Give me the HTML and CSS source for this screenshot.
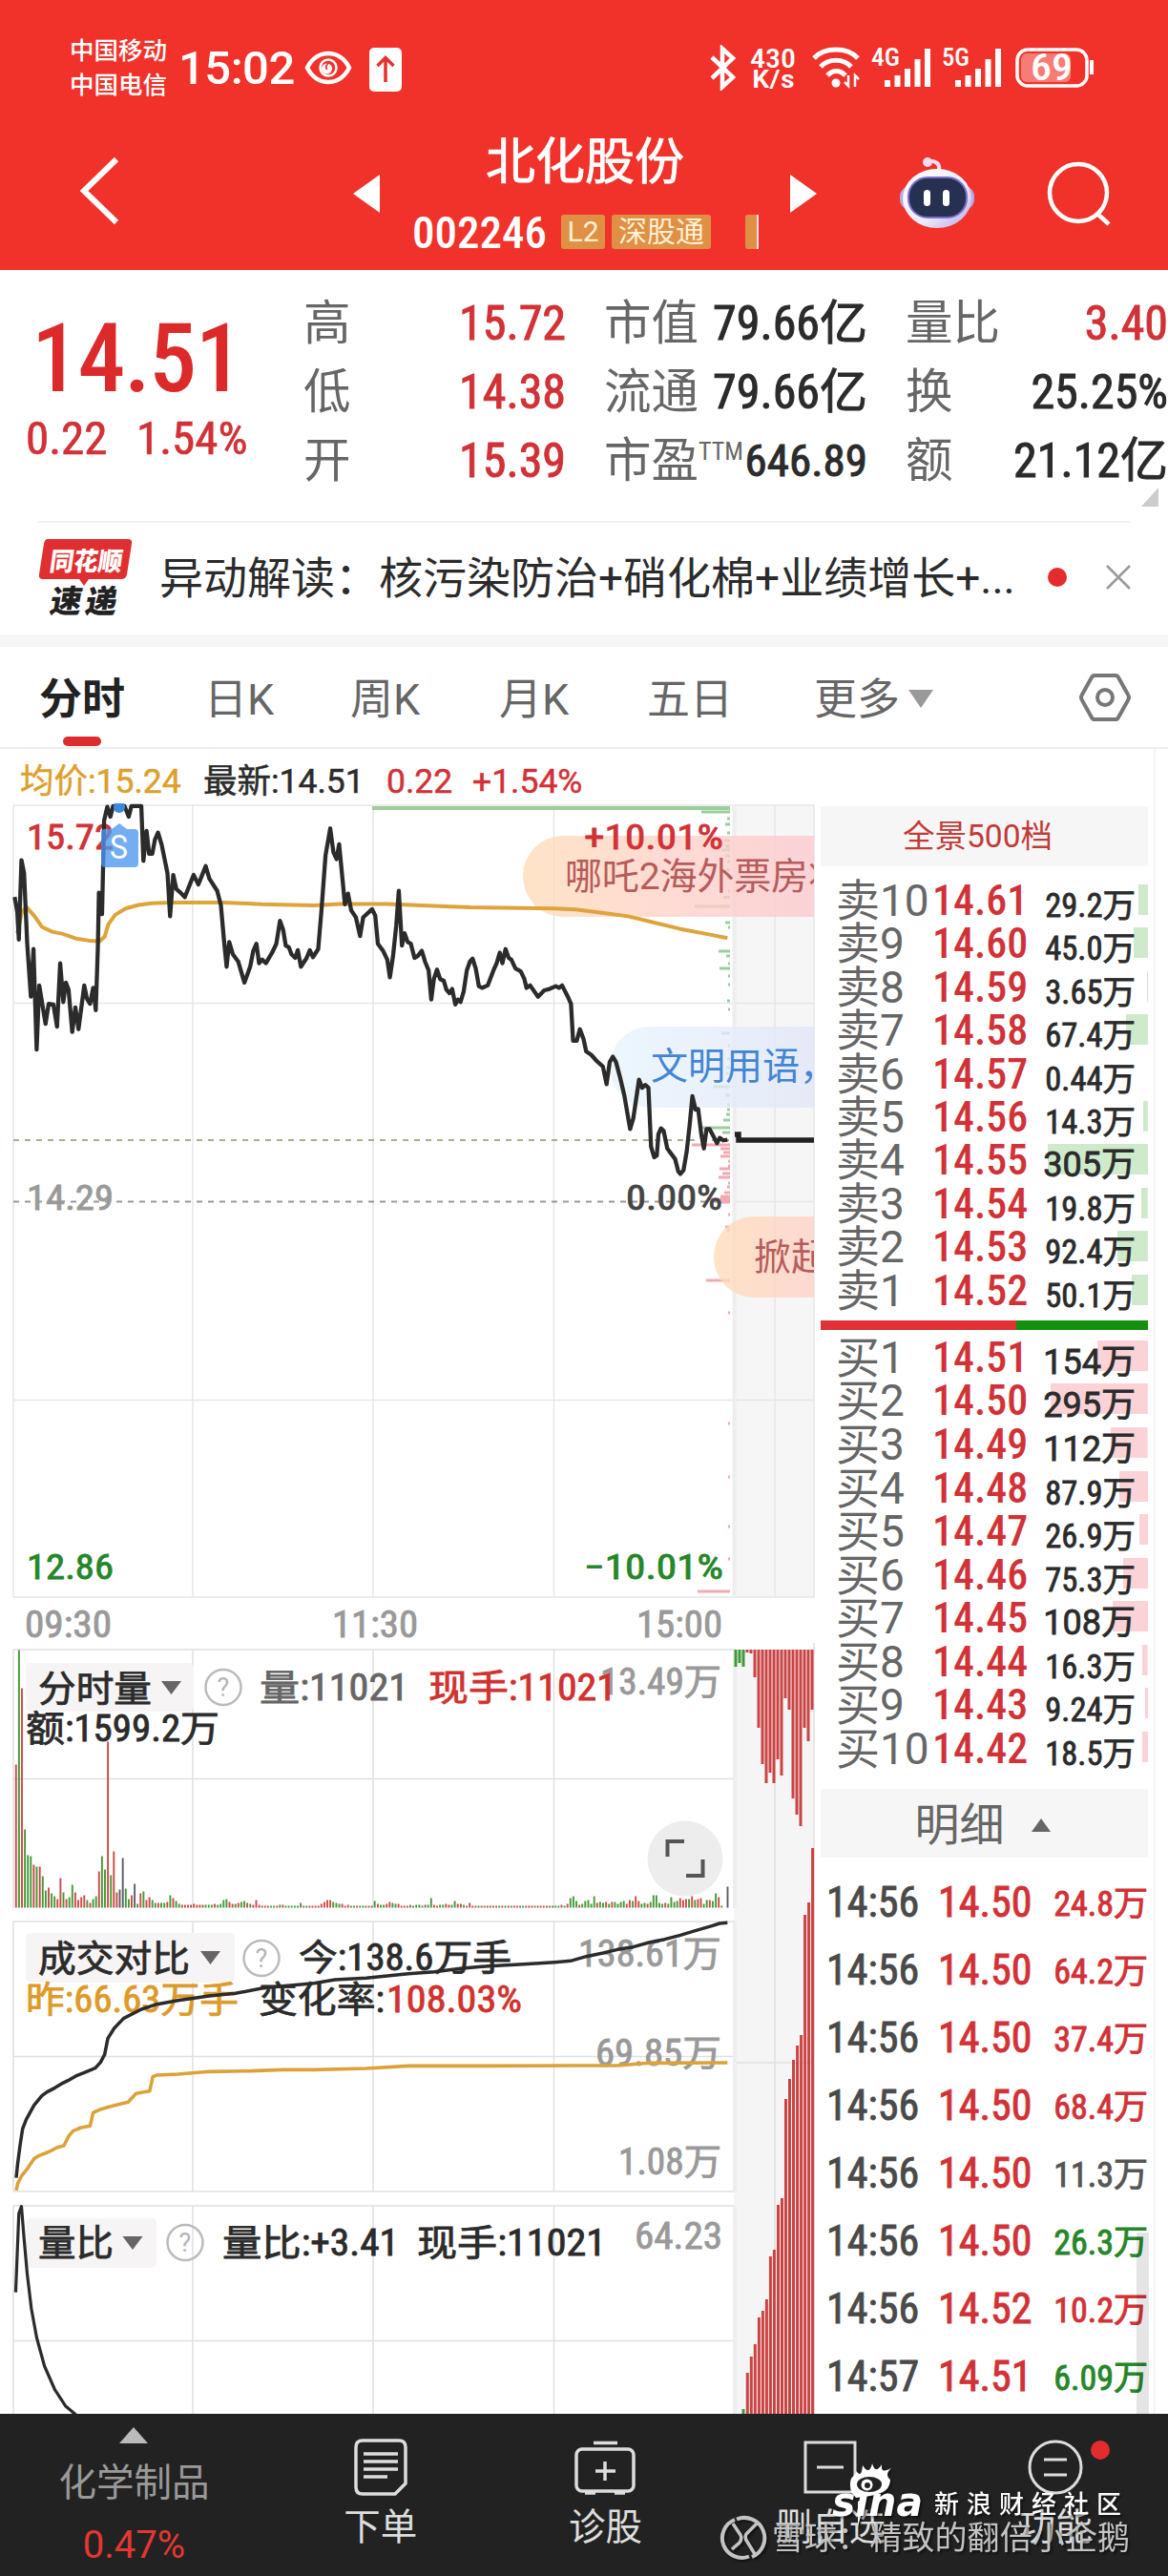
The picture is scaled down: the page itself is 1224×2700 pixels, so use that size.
FILE: index.html
```html
<!DOCTYPE html>
<html lang="zh-CN">
<head>
<meta charset="utf-8">
<title>北化股份 002246</title>
<link rel="stylesheet" href="styles.css">
</head>
<body>
<header class="top">
  <div class="status">
    <div class="carriers"><span>中国移动</span><span>中国电信</span></div>
    <span class="clock">15:02</span>
    <svg class="eye" width="50" height="36" viewBox="0 0 50 36" fill="none" stroke="#fff"><path d="M3 18C13 -2 37 -2 47 18 37 38 13 38 3 18Z" stroke-width="4.500"/><circle cx="25" cy="18" r="8.500" stroke-width="2.500"/><circle cx="23.500" cy="19" r="5.500" fill="#fff" stroke="none"/><path d="M26 13C23 14 22 17 23.500 20" stroke="#f0322b" stroke-width="1.800"/></svg>
    <svg class="up" width="34" height="46" viewBox="0 0 34 46"><rect width="34" height="46" rx="5" fill="#fff"/><path d="M17 36V11M8.500 19 17 10.500 25.500 19" fill="none" stroke="#e5302b" stroke-width="3.500"/></svg>
    <svg class="signals" width="406" height="48" viewBox="742 47 406 48" fill="none" stroke="#fff">
      <path d="M746 60 768 81 757 91V51L768 61 746 82" stroke-width="4.500"/>
      <g class="statnum" fill="#fff" stroke="none"><text x="786" y="71" font-size="28" textLength="48" lengthAdjust="spacingAndGlyphs">430</text><text x="788" y="92" font-size="25" textLength="45" lengthAdjust="spacingAndGlyphs">K/s</text><text x="913" y="69" font-size="26" textLength="30" lengthAdjust="spacingAndGlyphs">4G</text><text x="987" y="69" font-size="26" textLength="29" lengthAdjust="spacingAndGlyphs">5G</text></g>
      <path d="M853 61C864 49 888 49 899 61M860 70C868 61 884 61 892 70M867 79C873 73 880 73 886 79" stroke-width="5"/>
      <circle cx="876" cy="87" r="4.500" fill="#fff" stroke="none"/>
      <path d="M889 79V90L885 86M896 91V79L900 83" stroke-width="2.500"/>
      <path d="M930 84V91M940.500 79V91M951 72V91M961.500 62V91M972 51V91M1004 84V91M1014.500 79V91M1025 72V91M1035.500 62V91M1046 51V91" stroke-width="6"/>
      <rect x="1066" y="52" width="73" height="38" rx="11" stroke-width="3.500"/><rect x="1070" y="56" width="52" height="30" rx="6" fill="#f77c76" stroke="none"/><path d="M1144 63V78" stroke-width="4"/>
      <text class="statnum" x="1080" y="84" font-size="38" textLength="44" lengthAdjust="spacingAndGlyphs" fill="#fff" stroke="none">69</text>
    </svg>
  </div>
  <div class="titlebar">
    <svg class="back" width="44" height="72" viewBox="0 0 44 72"><path d="M40 3 6 36 40 69" fill="none" stroke="#fff" stroke-width="6"/></svg>
    <svg class="prev" width="28" height="40" viewBox="0 0 28 40"><path d="M28 0V40L0 20Z" fill="#fff"/></svg>
    <div class="title">
      <h1>北化股份</h1>
      <div class="code"><span class="codenum">002246</span><span class="badge l2">L2</span><span class="badge sgt">深股通</span><span class="badge cut"></span></div>
    </div>
    <svg class="next" width="28" height="40" viewBox="0 0 28 40"><path d="M0 0V40L28 20Z" fill="#fff"/></svg>
    <svg class="robot" width="80" height="76" viewBox="0 0 80 76">
      <defs><linearGradient id="shell" x1="0" y1="0" x2="1" y2="1"><stop offset="0" stop-color="#fff"/><stop offset=".6" stop-color="#ecebfa"/><stop offset="1" stop-color="#b5a4e8"/></linearGradient></defs>
      <path d="M42 14C43 8 39 4 31 5" fill="none" stroke="#f2dff2" stroke-width="4"/><circle cx="30" cy="6" r="5" fill="#f2dff2"/>
      <rect x="1" y="31" width="78" height="25" rx="11" fill="#b9a8e4"/><ellipse cx="40" cy="44" rx="36" ry="31" fill="url(#shell)"/><rect x="10" y="22" width="61" height="42" rx="20" fill="#263050" stroke="#7a6fcb" stroke-width="2"/><rect x="26" y="35" width="7" height="17" rx="3.500" fill="#fff"/><rect x="46" y="35" width="7" height="17" rx="3.500" fill="#fff"/>
    </svg>
    <svg class="search" width="70" height="70" viewBox="0 0 70 70" fill="none" stroke="#fff" stroke-width="4.500"><circle cx="34" cy="34" r="30"/><path d="M54 56 66 67"/></svg>
  </div>
</header>

<section class="quote">
  <div class="last"><div class="price">14.51</div><div class="chg"><span>0.22</span><span>1.54%</span></div></div>
  <dl class="q1"><dt>高</dt><dd class="red">15.72</dd><dt>低</dt><dd class="red">14.38</dd><dt>开</dt><dd class="red">15.39</dd></dl>
  <dl class="q2"><dt>市值</dt><dd>79.66亿</dd><dt>流通</dt><dd>79.66亿</dd><dt class="ttm">市盈<sup>TTM</sup></dt><dd class="pe">646.89</dd></dl>
  <dl class="q3"><dt>量比</dt><dd class="red">3.40</dd><dt>换</dt><dd>25.25%</dd><dt>额</dt><dd>21.12亿</dd></dl>
</section>
<div class="corner"><svg width="18" height="20" viewBox="0 0 18 20"><path d="M18 0V20H0Z" fill="#ccc"/></svg></div>

<section class="news">
  <svg class="flash" width="100" height="84" viewBox="40 563 100 84">
    <path d="M50 565H134Q139 565 138 570L133 602Q132 607 127 607H93L88 614 83 607H45Q40 607 41 602L46 570Q47 565 50 565Z" fill="#e02f30"/>
    <text x="0" y="0" transform="translate(51 598) skewX(-8)" font-size="27" font-weight="900" textLength="76" lengthAdjust="spacingAndGlyphs" fill="#fff">同花顺</text>
    <text x="0" y="0" transform="translate(51 642) skewX(-10)" font-size="33" font-weight="900" textLength="70" fill="#222">速递</text>
  </svg>
  <span class="headline">异动解读：核污染防治+硝化棉+业绩增长+...</span>
  <i class="dot"></i>
  <svg class="close" width="28" height="28" viewBox="0 0 28 28"><path d="M2 2 26 26M26 2 2 26" stroke="#999" stroke-width="2.500"/></svg>
</section>

<nav class="tabs">
  <span class="on">分时</span><span class="t2">日K</span><span class="t3">周K</span><span class="t4">月K</span><span class="t5">五日</span><span class="t6">更多</span>
  <svg class="more" width="26" height="19" viewBox="0 0 26 19"><path d="M0 0H26L13 19Z" fill="#999"/></svg>
  <svg class="hex" width="56" height="52" viewBox="0 0 56 52" fill="none" stroke="#777" stroke-width="4"><path d="M17 3H39Q41 3 42 5L52 23Q54 26 52 29L42 47Q41 49 39 49H17Q15 49 14 47L4 29Q2 26 4 23L14 5Q15 3 17 3Z"/><circle cx="28" cy="26" r="8"/></svg>
</nav>

<main class="body">
  <div class="charts">
    <div class="legend"><span class="avg">均价:15.24</span><span class="new">最新:14.51</span><span class="red d">0.22</span><span class="red">+1.54%</span></div>
    <svg class="chart" width="857" height="880" viewBox="0 842 857 880">
      <defs>
        <linearGradient id="warm" x1="0" x2="1"><stop offset="0" stop-color="#ffdcb8"/><stop offset=".45" stop-color="#ffd0c8"/><stop offset="1" stop-color="#fbc6d0"/></linearGradient>
        <linearGradient id="cool" x1="0" x2="1"><stop offset="0" stop-color="#e6f4fd"/><stop offset="1" stop-color="#dfe1f6"/></linearGradient>
        <clipPath id="plot"><rect x="0" y="842" width="853" height="840"/></clipPath>
      </defs>
      <rect x="768" y="844" width="85" height="830" fill="#f6f6f6"/>
      <path d="M14 844H853V1674H14ZM202 844V1674M391 844V1674M580.500 844V1674M812 844V1674M14 1051.500H853M770 1259.500H853M14 1467.500H853" fill="none" stroke="#e6e6e6" stroke-width="1.500"/>
      <path d="M769.500 844V1674" stroke="#eee" stroke-width="4"/>
      <path d="M14 1195H765" stroke="#a9b08c" stroke-width="2" stroke-dasharray="6 6"/>
      <path d="M14 1259.500H765" stroke="#999" stroke-width="2" stroke-dasharray="6 6"/>
      <path d="M390 847H765" stroke="#9bcd9d" stroke-width="4"/>
      <path id="chipsG" fill="none" stroke="#9bcd9d" stroke-width="3"/><path id="chipsR" fill="none" stroke="#f3a9b1" stroke-width="3"/>
      <g clip-path="url(#plot)"><g opacity=".78"><rect x="548" y="876" width="360" height="85" rx="42" fill="url(#warm)"/><rect x="639" y="1076" width="290" height="85" rx="42" fill="url(#cool)"/><rect x="748" y="1275" width="250" height="85" rx="42" fill="url(#warm)"/></g></g>
      <g class="fit" font-size="36"><text x="28" y="890" data-w="91" fill="#d13237">15.72</text><text x="612" y="890" data-w="146" fill="#d13237">+10.01%</text></g>
      <g clip-path="url(#plot)" font-size="39">
        <text x="592" y="932" fill="#b65c5c" textLength="294">哪吒2海外票房将</text>
        <text x="682" y="1131" fill="#4385d3">文明用语，</text>
        <text x="790" y="1331" fill="#b65c5c">掀起</text>
      </g>
      <g transform="translate(0 660) scale(.54845 .3699)" fill="none" stroke-linejoin="round">
        <polyline vector-effect="non-scaling-stroke" stroke="#dea43c" stroke-width="4" points="33,860 42,800 50,785 65,810 80,842 100,856 120,862 145,875 170,881 190,883 200,870 207,835 220,808 240,790 265,780 290,775 325,773 430,773 500,778 600,781 650,777 740,777 850,784 900,787 1000,789 1060,790 1100,793 1150,802 1200,812 1250,830 1300,848 1350,862 1390,874"/>
        <polyline vector-effect="non-scaling-stroke" stroke="#2b2b2b" stroke-width="4.300" points="28,757 33,800 36,878 41,653 46,690 52,890 59,1040 64,905 70,1190 75,1008 87,1117 93,1060 102,1062 109,1125 115,945 121,1055 126,1000 131,1020 138,1140 144,1070 150,1132 161,1008 166,1045 172,1060 178,1015 183,1078 187,900 189,745 195,806 199,540 205,502 211,530 216,500 238,500 246,530 251,500 270,500 274,655 280,570 285,635 291,635 296,595 302,575 309,610 320,690 325,812 331,695 337,735 345,745 353,758 362,725 370,695 379,722 385,700 393,670 400,705 415,740 422,780 428,880 433,955 438,885 445,920 455,940 460,965 467,1000 478,955 484,910 490,890 495,945 501,935 508,945 520,915 528,890 535,825 541,850 546,895 552,900 557,920 564,930 569,908 575,955 586,930 592,908 598,928 608,905 614,800 622,640 631,563 637,630 643,650 648,608 654,700 659,778 665,748 671,795 680,815 688,868 694,815 711,792 717,810 722,890 732,910 740,935 745,985 751,925 757,840 762,740 768,895 773,860 779,885 785,890 792,930 798,925 806,910 812,940 819,965 824,1048 829,990 835,963 841,990 848,995 853,1020 859,1030 864,1018 870,1062 875,1048 880,1055 886,1025 892,965 898,940 903,932 909,960 915,1010 921,1015 932,1008 943,965 949,945 955,915 960,945 966,905 972,930 977,935 985,960 995,968 1002,990 1006,1015 1013,1008 1028,1040 1040,1022 1050,1018 1062,1010 1068,1015 1074,1008 1085,1040 1091,1060 1095,1165 1102,1165 1108,1132 1115,1160 1120,1195 1130,1205 1140,1222 1152,1238 1159,1288 1165,1225 1171,1210 1177,1225 1185,1270 1193,1320 1204,1415 1210,1385 1221,1275 1227,1298 1233,1290 1239,1298 1244,1465 1250,1495 1255,1490 1258,1430 1263,1413 1268,1420 1275,1470 1290,1500 1296,1535 1300,1542 1306,1532 1312,1480 1318,1400 1323,1322 1329,1360 1334,1358 1340,1430 1345,1470 1350,1415 1356,1415 1363,1435 1370,1455 1375,1440 1382,1447 1390,1445"/>
      </g>
      <path d="M770 1189H774V1195H853" fill="none" stroke="#222" stroke-width="5.500"/>
      <circle cx="125" cy="846" r="6" fill="#3c8ade"/>
      <path d="M110 869H117L125 863 133 869H141Q145 869 145 873V905Q145 909 141 909H110Q106 909 106 905V873Q106 869 110 869Z" fill="#4d97ee" opacity=".78"/>
      <text x="115" y="900" font-size="35" fill="#fff" textLength="19" lengthAdjust="spacingAndGlyphs">S</text>
      <g class="fit" font-size="36">
        <text x="28" y="1268" data-w="91" fill="#999">14.29</text><text x="656" y="1268" data-w="101" fill="#444">0.00%</text>
        <text x="28" y="1655" data-w="91" fill="#26862a">12.86</text><text x="612" y="1655" data-w="146" fill="#26862a">−10.01%</text>
        <g font-size="38"><text x="26" y="1716" data-w="91" fill="#999">09:30</text><text x="348" y="1716" data-w="90" fill="#999">11:30</text><text x="667" y="1716" data-w="90" fill="#999">15:00</text></g>
      </g>
    </svg>
    <svg class="chart" width="857" height="808" viewBox="0 1722 857 808">
      <rect x="769" y="1729" width="84" height="801" fill="#f5f5f5"/>
      <path d="M14 2530V2312H770M14 2297H770M14 1729H770M14 1729V2000M14 2297V2014H770M14 1864.500H770M14 2155.500H770M14 2453.500H770M202 1729V2000M391 1729V2000M580.500 1729V2000M202 2014V2297M391 2014V2297M580.500 2014V2297M202 2312V2530M391 2312V2530M580.500 2312V2530M812 1729V2530M770 2162H853M853 1722V2530" fill="none" stroke="#e0e0e0" stroke-width="1.500"/>
      <path d="M770 1729V2000M770 2014V2297M770 2312V2530" stroke="#eee" stroke-width="4"/>
      <g fill="none" stroke-width="1.900"><path id="volR" stroke="#cc4a48"/><path id="volG" stroke="#439a37"/><path id="volN" stroke="#5b5f66"/></g>
      <g fill="none" stroke-width="3"><path id="depR" stroke="#cb4343"/><path id="depG" stroke="#3f9a3a"/></g>
      <circle cx="718" cy="1948" r="39.500" fill="#ededed"/><path d="M699.500 1946V1930H717M736.500 1949V1966H719" fill="none" stroke="#555" stroke-width="4"/>
      <g fill="#f7f4f5"><rect x="27" y="1743" width="176" height="51" rx="5"/><rect x="27" y="2026" width="219" height="52" rx="5"/><rect x="27" y="2325" width="137" height="52" rx="5"/></g>
      <g fill="#666"><path d="M169 1762H190L179.500 1776ZM210 2045H231L220.500 2059ZM128.500 2344H149.500L139 2358Z"/></g>
      <g fill="none" stroke="#bbb" stroke-width="2.500"><circle cx="234" cy="1768.500" r="18.500"/><circle cx="274" cy="2052.500" r="18.500"/><circle cx="194" cy="2350.500" r="18.500"/></g>
      <g fill="#b5b5b5" font-size="27" text-anchor="middle"><text x="234" y="1778">?</text><text x="274" y="2062">?</text><text x="194" y="2360">?</text></g>
      <g class="fit" font-size="38" fill="#2b2b2b">
        <text x="40" y="1783" data-w="119">分时量</text><text x="272" y="1782" data-w="156" fill="#666">量:11021</text><text x="629" y="1776" data-w="127" fill="#999">13.49万</text><text x="449" y="1782" data-w="197" fill="#d0322f">现手:11021</text><text x="27" y="1825" data-w="203">额:1599.2万</text>
        <text x="40" y="2066" data-w="159">成交对比</text><text x="313" y="2065" data-w="223">今:138.6万手</text><text x="606" y="2061" data-w="150" fill="#999">138.61万</text><text x="27" y="2109" data-w="223" fill="#dd9a28">昨:66.63万手</text><text x="271" y="2109" data-w="132">变化率:</text><text x="405" y="2109" data-w="142" fill="#d0322f">108.03%</text><text x="624" y="2165" data-w="132" fill="#999">69.85万</text><text x="648" y="2279" data-w="108" fill="#999">1.08万</text>
        <text x="40" y="2364" data-w="79">量比</text><text x="233" y="2364" data-w="185">量比:+3.41</text><text x="437" y="2364" data-w="198">现手:11021</text><text x="665" y="2357" data-w="92" fill="#999">64.23</text>
      </g>
      <g transform="translate(0 1710) scale(.54845 .33333)" fill="none" stroke-linejoin="round">
        <polyline vector-effect="non-scaling-stroke" stroke="#dba23a" stroke-width="3.600" points="1390,1356 1240,1357 1180,1365 1100,1365 940,1366 780,1366 700,1374 600,1378 540,1378 480,1382 400,1384 340,1392 300,1395 292,1400 286,1445 270,1450 260,1453 245,1480 230,1486 210,1494 190,1504 178,1513 172,1555 155,1560 140,1570 132,1585 122,1617 110,1622 95,1635 75,1648 65,1658 52,1690 42,1710 34,1735 31,1758"/>
        <polyline vector-effect="non-scaling-stroke" stroke="#2b2b2b" stroke-width="3.500" points="1390,916 1375,918 1360,926 1330,940 1300,955 1270,968 1240,978 1210,992 1180,1000 1150,1012 1120,1022 1090,1036 1060,1040 1000,1046 920,1054 880,1060 830,1070 780,1076 700,1090 640,1095 600,1106 540,1115 500,1122 450,1138 400,1146 340,1160 300,1172 270,1188 236,1217 218,1248 206,1280 200,1330 192,1355 182,1373 160,1388 145,1398 130,1412 120,1420 105,1435 90,1448 80,1460 65,1490 50,1535 43,1565 38,1620 34,1670 31,1718"/>
        <polyline vector-effect="non-scaling-stroke" stroke="#2b2b2b" stroke-width="3.200" points="30,2078 36,1830 41,1808 46,1910 52,2020 60,2130 70,2220 85,2310 105,2385 125,2435 145,2463"/>
      </g>
    </svg>
  </div>

  <aside class="book">
    <div class="allbtn">全景500档</div>
    <div class="rows" id="sell"></div>
    <div class="ratio"><i></i></div>
    <div class="rows buy" id="buy"></div>
    <div class="detail">明细<svg width="20" height="14" viewBox="0 0 20 14"><path d="M0 14H20L10 0Z" fill="#666"/></svg></div>
    <div class="trades" id="trades"></div>
    <i class="scroll"></i>
  </aside>
</main>

<footer class="bar">
  <div class="sector"><svg width="30" height="17" viewBox="0 0 30 17"><path d="M0 17H30L15 0Z" fill="#bbb"/></svg><span>化学制品</span><b>0.47%</b></div>
  <div class="act"><svg width="56" height="60" viewBox="0 0 56 60" fill="none" stroke="#ddd" stroke-width="3.500"><path d="M9 2H47Q54 2 54 9V47L43 58H9Q2 58 2 51V9Q2 2 9 2ZM10 16H46M10 24H46M10 32H46M10 40H35"/></svg><span>下单</span></div>
  <div class="act"><svg width="64" height="60" viewBox="0 0 64 60" fill="none" stroke="#ddd" stroke-width="3.500"><rect x="2" y="11" width="60" height="44" rx="6"/><path d="M20 4.500H45M32 24V44M22 34H43M11 57H22M42 57H53"/></svg><span>诊股</span></div>
  <div class="act"><svg width="64" height="60" viewBox="0 0 64 60" fill="none" stroke="#ddd" stroke-width="3"><rect x="6" y="4" width="52" height="52"/><path d="M18 30H46"/></svg><span>删自选</span></div>
  <div class="act"><svg width="60" height="60" viewBox="0 0 60 60" fill="none" stroke="#ddd" stroke-width="3"><circle cx="30" cy="30" r="27"/><path d="M18 22H42M18 38H42"/></svg><span>功能</span><i class="dot"></i></div>
  <svg class="marks" width="440" height="120" viewBox="750 2580 440 120">
    <g class="shadow">
    <g fill="none" stroke="#c4c4c4" stroke-width="4"><path d="M770 2641A20.500 20.500 0 0 0 785 2679.500M788 2680A20.500 20.500 0 0 0 772 2640.500"/><path d="M768 2645 776 2657Q778 2661 775 2665L767 2672M793 2645 782 2656Q780 2660 783 2664L791 2677" stroke-width="3.500"/></g>
    <text x="809" y="2672" font-size="34" fill="#c4c4c4" textLength="375">雪球：精致的翻倍小企鹅</text>
    <path d="M892 2612C888 2592 898 2597 897 2590 903 2597 903 2590 904 2584 910 2594 913 2587 914 2582 917 2592 921 2588 924 2583 923 2592 928 2590 934 2587 927 2593 931 2597 933 2599 932 2614 920 2615 897 2618 892 2612Z" fill="#fff"/>
    <ellipse cx="911" cy="2604" rx="13" ry="8" fill="#222"/><circle cx="908.500" cy="2604.500" r="6" fill="#fff"/><circle cx="909" cy="2605" r="3" fill="#222"/>
    <text class="sina" x="872" y="2637" textLength="95" lengthAdjust="spacingAndGlyphs" fill="#fff">sına</text>
    <path d="M899 2622 907 2619 902 2637 899 2648Z" fill="#fff"/>
    <text x="979" y="2634" font-size="26" fill="#fff" textLength="196" font-weight="500">新浪财经社区</text>
    </g>
  </svg>
</footer>
<script src="app.js"></script>
</body>
</html>
```
FILE: styles.css
```css
* { box-sizing: border-box; }
body { margin: 0; width: 1224px; height: 2700px; overflow: hidden; display: flex; flex-direction: column; background: #fff; color: #2b2b2b; font-family: Roboto, "Noto Sans CJK SC", sans-serif; }
svg { display: block; flex: none; }
i { font-style: normal; }
.red { color: #d13237; }

.top { height: 283px; background: #f0322b; color: #fff; display: flex; flex-direction: column; }
.status { display: flex; padding: 36px 0 0 73px; height: 140px; align-items: flex-start; }
.carriers { display: flex; flex-direction: column; width: 114px; font-size: 25.5px; font-weight: 500; line-height: 35.5px; }
.clock { width: 132px; font-size: 49px; line-height: 72px; font-weight: 500; font-stretch: 90%; letter-spacing: -.5px; }
.eye { margin-top: 17px; }
.up { margin: 14px 321px 0 18px; }
.signals { margin-top: 11px; }
.signals text { overflow: visible; }
.statnum { font-family: Roboto, sans-serif; font-stretch: 82%; font-weight: 500; }

.titlebar { display: flex; align-items: flex-start; padding-left: 82px; height: 143px; }
.back { margin-top: 24px; }
.prev { margin: 43px 0 0 244px; }
.title { width: 430px; display: flex; flex-direction: column; padding: 3px 0 0 34px; }
h1 { margin: 0; width: 362px; text-align: center; font-size: 52px; font-weight: 400; line-height: 56px; -webkit-text-stroke: .9px #fff; }
.code { display: flex; align-items: center; margin-top: 8px; height: 72px; }
.codenum { width: 156px; font-size: 47px; font-weight: 500; font-stretch: 87%; }
.badge { height: 36px; line-height: 35px; font-size: 30px; background: #df9044; color: #fdf0d4; border-radius: 3px; text-align: center; }
.l2 { width: 46px; font-stretch: 90%; margin-right: 7px; }
.sgt { width: 104px; margin-right: 36px; }
.cut { width: 14px; border-right: 2px solid #fde; border-radius: 3px 0 0 3px; }
.next { margin-top: 43px; }
.robot { margin: 24px 0 0 86px; }
.search { margin: 28px 0 0 74px; }

.quote { display: flex; height: 228px; padding-top: 20px; }
.last { width: 318px; }
.price { padding: 21px 0 0 33px; font-size: 100px; line-height: 104px; font-weight: 500; font-stretch: 75%; color: #dc2a2a; letter-spacing: -1.5px; }
.chg { display: flex; padding-left: 27px; font-size: 49px; line-height: 68px; font-stretch: 87%; color: #d13237; margin-top: -2px; -webkit-text-stroke: .7px currentColor; }
.chg span:first-child { width: 116px; }
dl { display: grid; grid-template-columns: auto 1fr; grid-auto-rows: 72px; line-height: 72px; margin: 0; font-size: 50px; align-items: center; }
dt { color: #666; font-size: 49.5px; white-space: nowrap; font-stretch: 80%; }
dd { margin: 0; text-align: right; font-stretch: 81%; white-space: nowrap; -webkit-text-stroke: 1px currentColor; }
dt sup { font-size: 26px; line-height: 20px; vertical-align: 18px; }
.q1 { width: 275px; }
.q2 { width: 276px; margin-left: 40px; grid-template-columns: 98px 1fr; }
.q3 { width: 275px; margin-left: 40px; }
dd.pe { font-size: 47px; font-stretch: 78%; }
.corner { display: flex; justify-content: flex-end; height: 37px; margin: 0 40px; border-bottom: 2px solid #f0f0f0; }
.corner svg { margin-right: -30px; }

.news { display: flex; height: 130px; padding: 15px 0 0 40px; border-bottom: 13px solid #f6f6f6; }
.headline { width: 931px; padding: 4px 0 0 27px; font-size: 46px; line-height: 78px; white-space: nowrap; }
.dot { width: 20px; height: 20px; border-radius: 50%; background: #e32c2e; }
.news .dot { margin: 32px 40px 0 27px; }
.close { margin-top: 28px; }
.flash { font-family: "Noto Sans CJK SC", sans-serif; }

.tabs { display: flex; height: 107px; line-height: 111px; font-size: 45px; color: #666; padding-left: 41px; border-bottom: 2px solid #eee; }
.tabs span { width: 160px; white-space: nowrap; }
.tabs .on { width: 173px; font-weight: 700; color: #222; position: relative; }
.on::after { content: ""; position: absolute; left: 25px; bottom: 1px; width: 40px; height: 10px; border-radius: 5px; background: #dc2c2e; }
.tabs .t2 { width: 153px; }
.tabs .t3 { width: 156px; }
.tabs .t4 { width: 155px; }
.tabs .t5 { width: 175px; }
.tabs .t6 { width: 99px; }
.more { margin-top: 45px; }
.hex { margin: 27px 0 0 152px; }

.body { display: flex; height: 1745px; overflow: hidden; }
.charts { width: 857px; flex: none; }
.legend { display: flex; height: 57px; line-height: 68px; padding-left: 21px; font-size: 35.5px; font-stretch: 91%; white-space: nowrap; -webkit-text-stroke: .5px currentColor; }
.avg { width: 192px; color: #dda02c; }
.new { width: 192px; }
.d { width: 90px; }
.chart { font-family: Roboto, "Noto Sans CJK SC", sans-serif; }
.fit { font-stretch: 82%; stroke-width: .8px; }

.book { position: relative; flex: none; width: 354px; padding: 60px 6px 0 3px; border-right: 2px solid #f4f4f4; }
.allbtn { height: 63px; line-height: 64px; background: #f6f6f6; text-align: center; font-size: 33.5px; color: #c23b38; padding-right: 14px; }
.rows { padding-top: 14px; }
.row { display: grid; grid-template-columns: 100px 118px 112px 14px; height: 45.4px; line-height: 44px; align-items: start; background: linear-gradient(var(--tint), var(--tint)) right 5px / var(--w) 32px no-repeat; --tint: #cfeacb; }
.buy { padding-top: 6px; }
.buy .row { --tint: #fbd2d6; height: 45.55px; line-height: 46px; }
.lab { padding-left: 16px; color: #666; font-size: 46px; white-space: nowrap; }
.p { padding-left: 17px; font-size: 44px; font-stretch: 86%; font-weight: 530; color: #d13237; }
.v { text-align: right; font-size: 34.5px; font-stretch: 83%; white-space: nowrap; padding-top: 5px; -webkit-text-stroke: .8px currentColor; }
.v.whole { font-stretch: 98%; font-size: 36px; }
.ratio { height: 10px; margin-top: 8px; background: #14900f; }
.ratio i { display: block; height: 10px; width: 205px; background: #e03236; }
.detail { display: flex; align-items: center; justify-content: center; gap: 28px; height: 72px; margin-top: 20px; padding: 3px 4px 0 0; background: #f6f6f6; color: #666; font-size: 47px; line-height: 69px; }
.trades { padding-top: 12px; }
.tr { display: grid; grid-template-columns: 117px 110px 116px; height: 71px; line-height: 71px; font-size: 44px; font-stretch: 86%; padding-left: 6px; -webkit-text-stroke: .9px currentColor; }
.tr b { font-weight: 400; font-stretch: 84%; color: #d13237; }
.tr em { font-style: normal; text-align: right; font-size: 36px; font-stretch: 84%; padding-right: 6px; white-space: nowrap; line-height: 75px; }
.tr span { color: #4a4a4a; }
.tr .r { color: #d13237; }
.tr .g { color: #26862a; }
.tr .n { color: #555; }
.scroll { position: absolute; right: 5px; top: 1555px; width: 13px; height: 190px; background: rgba(0, 0, 0, .1); }

.bar { position: relative; display: flex; height: 170px; background: #222; color: #ddd; font-size: 38.5px; }
.sector { width: 281px; display: flex; flex-direction: column; align-items: center; padding-top: 14px; color: #999; }
.sector span { font-size: 39.5px; line-height: 60px; margin-top: 12px; }
.sector b { font-size: 40px; line-height: 60px; margin-top: 5px; font-weight: 400; font-stretch: 98%; color: #e23832; }
.act { position: relative; width: 236px; display: flex; flex-direction: column; align-items: center; padding-top: 26px; line-height: 60px; }
.act span { margin-top: 3px; }
.act .dot { position: absolute; left: 155px; top: 28px; }
.marks { position: absolute; left: 750px; top: 50px; font-family: "Noto Sans CJK SC", sans-serif; }
.shadow { filter: drop-shadow(2px 2px 1px rgba(0, 0, 0, .5)); }
.sina { font-family: "DejaVu Sans", sans-serif; font-weight: 700; font-style: italic; font-size: 43px; }
```
FILE: app.js
```js
const $ = id => document.getElementById(id);

// Order book levels: [label, price, volume text, volume in 万]
const book = (side, prices, vols) => prices.map((p, i) => {
  const n = side === '卖' ? 10 - i : i + 1;
  const v = parseFloat(vols[i]);
  const whole = vols[i].includes('.') ? '' : ' whole';
  return `<div class="row" style="--w:${(v * .345).toFixed(1)}px"><span class="lab">${side}${n}</span><span class="p">${p}</span><span class="v${whole}">${vols[i]}万</span></div>`;
}).join('');
$('sell').innerHTML = book('卖', '14.61 14.60 14.59 14.58 14.57 14.56 14.55 14.54 14.53 14.52'.split(' '), '29.2 45.0 3.65 67.4 0.44 14.3 305 19.8 92.4 50.1'.split(' '));
$('buy').innerHTML = book('买', '14.51 14.50 14.49 14.48 14.47 14.46 14.45 14.44 14.43 14.42'.split(' '), '154 295 112 87.9 26.9 75.3 108 16.3 9.24 18.5'.split(' '));
$('trades').innerHTML = [['14:56', '14.50', '24.8', 'r'], ['14:56', '14.50', '64.2', 'r'], ['14:56', '14.50', '37.4', 'r'], ['14:56', '14.50', '68.4', 'r'], ['14:56', '14.50', '11.3', 'n'], ['14:56', '14.50', '26.3', 'g'], ['14:56', '14.52', '10.2', 'r'], ['14:57', '14.51', '6.09', 'g']]
  .map(t => `<div class="tr"><span>${t[0]}</span><b>${t[1]}</b><em class="${t[3]}">${t[2]}万</em></div>`).join('');

// Minute volumes, one letter for colour and a height in px
const vol = 'r150 g270 r230 g82 g55 g54 r45 g43 r43 g33 g18 r21 g15 g12 r9 r31 g16 r9 g11 g24 r16 r8 r11 r13 g8 r5 g9 g12 r38 g54 g40 r174 g34 r59 r16 n19 n52 g20 g9 r13 n25 g4 r15 g17 r8 r11 g8 g5 r5 g5 g5 r6 g13 r10 g7 g4 r3 r3 r3 r3 r4 r3 r3 r3 g3 g3 g3 r4 g3 g4 g8 g9 r6 r4 g4 r5 g6 g7 r5 g4 r3 r8 r3 r2 r2 r2 g2 g2 r2 g3 r3 g2 g2 g2 g2 g2 g5 r2 g2 r2 r2 r2 r2 r4 r6 r8 r8 g6 g5 g4 r4 r2 r3 g2 g2 r2 g2 g2 r2 g2 r2 g7 r4 g3 g3 r4 r6 g5 g4 r4 r2 r2 r2 g3 r2 g3 g3 g2 r3 g3 g10 r3 r2 g3 g3 r4 r3 g3 g7 r4 r4 g3 r2 r5 r2 r2 g2 r2 g2 r2 r2 g2 r2 g2 r2 g2 r2 g2 r2 r2 g2 g2 r2 r2 r2 g2 r2 r2 r2 r2 g2 r2 g2 g2 r3 g2 r4 g10 g12 g7 r3 g4 g7 g8 g4 g12 r5 g6 g5 r6 g4 r6 g6 g4 g6 g7 r4 r8 g7 r12 r7 g4 g5 r4 g6 g13 g13 g5 g4 r5 g4 g11 g6 g7 r10 r8 r9 g9 r12 g8 r9 r10 g4 g8 r8 g7 g15 r11 g2'.split(' ');
const out = { r: '', g: '', n: '' };
vol.forEach((s, i) => { if (i < 240) out[s[0]] += `M${(16.8 + i * 3.107).toFixed(1)} 1999.500v-${s.slice(1)}`; });
out.n += 'M762.500 1999.500v-22';
$('volR').setAttribute('d', out.r); $('volG').setAttribute('d', out.g); $('volN').setAttribute('d', out.n);

// Auction strip: bars hanging from the top, bars rising from the bottom
const down = [4, 29, 82, 120, 140, 129, 140, 115, 132, 51, 63, 156, 173, 185, 82, 96, 63];
const up = [2487, 2470, 2457, 2429, 2422, 2410, 2365, 2358, 2311, 2304, 2200, 2179, 2159, 2144, 2133, 2007, 1994, 1937];
let d = 'M783 1729v3';
down.forEach((h, i) => { d += `M${787 + i * 4} 1729v${h}`; });
up.forEach((y, i) => { d += `M${(783.3 + i * 4.02).toFixed(1)} 2530V${y}`; });
$('depR').setAttribute('d', d);
$('depG').setAttribute('d', 'M771 1729v18M775 1729v14M779 1729v18M779 2530v-5');

// Chips profile against the right edge of the price plot: [y, length]
const g = [[851, 30], [858, 3], [864, 5], [873, 3], [881, 6], [887, 5], [891, 9], [897, 5], [903, 3], [912, 4], [920, 3], [934, 2], [940.500, 7], [950, 37], [967, 5], [972, 2], [997, 12], [1002, 4], [1010, 2], [1015, 11], [1023, 2], [1032, 2], [1049, 3], [1058, 2], [1083, 9], [1096, 2], [1110, 3], [1119, 4], [1125, 4], [1139, 18], [1148, 5], [1158, 3], [1163, 3], [1168, 4], [1174, 7], [1182, 30], [1187, 8]];
const r = [[1200, 40], [1204, 10], [1208, 7], [1212, 10], [1217, 2], [1222, 2], [1225, 11], [1230, 8], [1234, 12], [1240, 2], [1244, 3], [1250, 6], [1254, 10], [1257, 24], [1260, 10], [1273, 2], [1286, 5], [1290, 3], [1342, 25], [1376, 2], [1492, 2], [1548, 2], [1600, 2], [1634, 2], [1668, 34]];
const path = a => a.map(([y, w]) => `M765 ${y}h-${w}`).join('');
$('chipsG').setAttribute('d', path(g)); $('chipsR').setAttribute('d', path(r));

// Readouts are set to fixed widths
document.querySelectorAll('.fit text').forEach(t => {
  t.setAttribute('textLength', t.dataset.w);
  t.setAttribute('lengthAdjust', 'spacingAndGlyphs');
  t.setAttribute('stroke', t.getAttribute('fill') || '#2b2b2b');
});
```
